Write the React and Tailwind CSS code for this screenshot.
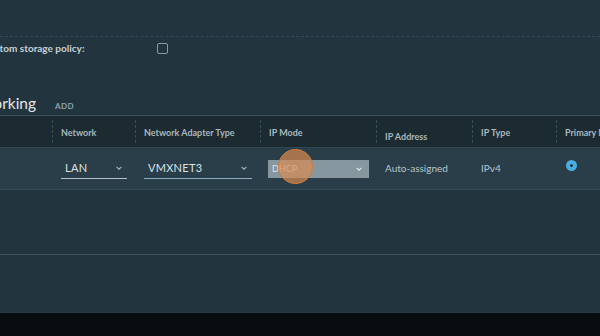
import React from "react";

const Chevron = ({ className }) => (
  <svg width="8" height="8" viewBox="0 0 10 10" fill="none" stroke="currentColor" strokeWidth="1.3" className={className}>
    <polyline points="2 3.5 5 6.5 8 3.5" />
  </svg>
);

const Select = ({ label, width, lineClass }) => (
  <div className={`flex items-center justify-between h-[20px] border-b ${lineClass} ${width} pl-[4px] pr-[4px]`}>
    <span className="text-[11px] text-[#dbe3e7] tracking-wide">{label}</span>
    <Chevron className="text-[#a7b6bd]" />
  </div>
);

const HeadCell = ({ children, width, pad = "pt-[3px]" }) => (
  <div className={`flex h-full ${width}`}>
    <div className="w-px my-[4px] border-l border-dashed border-[#3a4c55]" />
    <div className={`pl-[8px] ${pad} text-[9px] font-bold text-[#a9b7be] whitespace-nowrap flex items-center`}>
      {children}
    </div>
  </div>
);

export default function App() {
  return (
    <div className="w-[600px] h-[336px] bg-[#080d10] overflow-hidden" style={{ fontFamily: "Lato, 'Open Sans', sans-serif" }}>
      <div className="h-[313px] bg-[#22353e] flex flex-col relative">
        <div className="h-[36px]" />
        <div className="border-t border-dashed border-[#2f4b58]" />
        <div className="flex items-center h-[20px] mt-[1px]">
          <span className="-ml-[17px] w-[174px] text-[10px] font-bold text-[#c6d0d5]">Custom storage policy:</span>
          <div className="w-[11px] h-[11px] rounded-[2px] border border-[#8a9aa2]" />
        </div>
        <div className="h-[33px]" />
        <div className="flex items-end h-[24px] pb-[4px]">
          <span className="-ml-[44px] text-[15.5px] text-[#e1e7ea] leading-none">Networking</span>
          <span className="ml-[19px] text-[8px] font-bold tracking-wider text-[#8fa3ad] leading-none mb-[1px]">ADD</span>
        </div>
        <div className="border-t border-[#3e525b]" />
        <div className="flex h-[31px] bg-[#1c2b32]">
          <div className="w-[52px]" />
          <HeadCell width="w-[83px]">Network</HeadCell>
          <HeadCell width="w-[125px]">Network Adapter Type</HeadCell>
          <HeadCell width="w-[116px]">IP Mode</HeadCell>
          <HeadCell width="w-[96px]" pad="pt-[10px]">IP Address</HeadCell>
          <HeadCell width="w-[84px]">IP Type</HeadCell>
          <HeadCell width="w-[44px]">Primary NIC</HeadCell>
        </div>
        <div className="border-t border-[#30454f]" />
        <div className="flex items-center h-[41px] bg-[#293e49] relative">
          <div className="w-[61px]" />
          <Select label="LAN" width="w-[66px]" lineClass="border-[#b5c2c8]" />
          <div className="w-[17px]" />
          <Select label="VMXNET3" width="w-[108px]" lineClass="border-[#8fb0c4]" />
          <div className="w-[16px]" />
          <div className="flex items-center justify-between w-[101px] h-[18px] bg-[#8797a0] pl-[4px] pr-[6px]">
            <span className="text-[9px] text-[#dfe5e8]">DHCP</span>
            <Chevron className="text-[#e3e8eb]" />
          </div>
          <div className="w-[16px]" />
          <span className="w-[96px] text-[10px] text-[#b9c5cb]">Auto-assigned</span>
          <span className="w-[85px] text-[10px] text-[#b9c5cb]">IPv4</span>
          <div className="-mt-[7px] w-[11px] h-[11px] rounded-full bg-[#49aee0] flex items-center justify-center">
            <div className="w-[3px] h-[3px] rounded-full bg-[#1d3440]" />
          </div>
          <div className="absolute left-[278px] top-[1px] w-[35px] h-[35px] rounded-full bg-[#d98c52]/70 border-[1.5px] border-[#d07a3a]" />
        </div>
        <div className="border-t border-[#34474f]" />
        <div className="h-[64px]" />
        <div className="border-t border-[#3e525b]" />
        <div className="flex-1" />
        <div className="border-t border-[#263a43]" />
      </div>
    </div>
  );
}
